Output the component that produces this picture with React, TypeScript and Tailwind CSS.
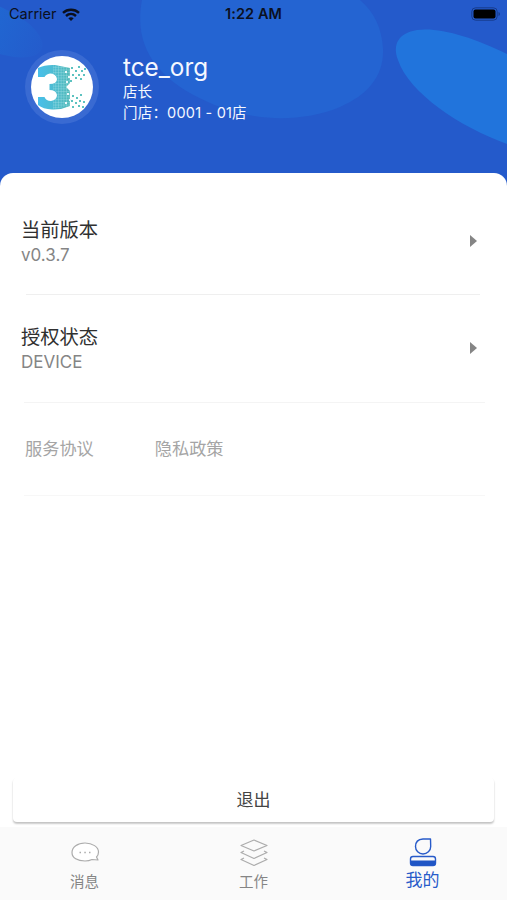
import type { ReactNode } from 'react';

const dots = [
  [41, 11], [48, 10], [51, 14], [45, 14], [54, 12], [42, 18], [48, 18], [53, 18],
  [45, 21], [50, 22], [40, 24], [42, 39], [46, 41], [50, 38], [41, 44], [45, 46],
  [49, 44], [53, 45], [48, 49], [52, 50], [42, 50],
];

const holes = [[34, 15], [37, 20], [35, 25], [36, 37], [34, 46], [38, 43]];

function Wifi() {
  return (
    <svg width="18" height="13" viewBox="0 0 18 13" fill="none" stroke="#0b0f1c" strokeWidth="2.4">
      <path d="M1 4.8C5.5.7 12.5.7 17 4.8M4 8C6.9 5.3 11.1 5.3 14 8" />
      <path d="M6.3 10.2C7.9 8.8 10.1 8.8 11.7 10.2L9 13Z" fill="#0b0f1c" stroke="none" />
    </svg>
  );
}

function Battery() {
  return (
    <svg width="30" height="14" viewBox="0 0 30 14">
      <rect x="0.8" y="0.8" width="25.4" height="12.4" rx="3.8" fill="none" stroke="#173b8c" />
      <rect x="2.5" y="2.5" width="22" height="9" rx="2" fill="#000" />
      <path d="M27.5 5v4q1.500-.5 1.500-2t-1.500-2" fill="#173b8c" />
    </svg>
  );
}

function Avatar() {
  return (
    <div className="flex size-[74px] items-center justify-center rounded-full bg-[#396ad2]">
      <svg width="62" height="62" viewBox="0 0 62 62">
        <defs>
          <linearGradient id="three" x1="0" x2="1">
            <stop stopColor="#48bfea" />
            <stop offset="1" stopColor="#52b9b7" />
          </linearGradient>
          <pattern id="mesh" width="2.7" height="2.7" patternUnits="userSpaceOnUse">
            <path d="M0 0H2.7M0 0V2.7" stroke="#a5dfe8" strokeWidth="0.7" />
          </pattern>
        </defs>
        <circle cx="31" cy="31" r="31" fill="#fff" />
        <path
          d="M7 12Q14 8.500 24 9L39 12V27L35 31L39 35V50Q30 54 21 53.500Q12 53 7 49V41H13.500Q15 45 20 45Q26 44 26 39Q25 34 18.500 34V28Q26 28 26 23Q25 17.500 19 17.500Q15 18 13.500 21H7Z"
          fill="url(#three)"
        />
        <path
          d="M22 9L39 12V27L35 31L39 35V50L22 53V45Q26 43 26 39Q26 35 22 34V28Q26 27 26 23Q26 18 22 18Z"
          fill="url(#mesh)"
        />
        {holes.map(([x, y]) => (
          <rect key={`${x}-${y}`} x={x} y={y} width="2" height="2" fill="#e8f8fa" />
        ))}
        {dots.map(([x, y]) => (
          <rect key={`${x}-${y}`} x={x - 1} y={y} width="2" height="2" fill="#5cc2c0" />
        ))}
      </svg>
    </div>
  );
}

function Row({ title, value }: { title: string; value: string }) {
  return (
    <div className="flex items-center justify-between pr-[30px] pl-[21px]">
      <div>
        <div className="text-[19.3px] leading-[26px] text-[#303030]">{title}</div>
        <div className="text-[17px] leading-6 text-[#858585]">{value}</div>
      </div>
      <svg className="mb-0.5" width="7" height="12" viewBox="0 0 7 12" fill="#858585">
        <path d="M0 0L7 6L0 12Z" />
      </svg>
    </div>
  );
}

function Tab({ label, active, children }: { label: string; active?: boolean; children: ReactNode }) {
  return (
    <div className="flex flex-1 flex-col items-center pt-2">
      <svg
        width="30"
        height="34"
        viewBox="0 0 30 34"
        fill="none"
        stroke={active ? '#285bc9' : '#acacac'}
        strokeWidth="1.2"
        strokeLinejoin="round"
      >
        {children}
      </svg>
      <div className={active ? 'mt-px text-[17px] leading-5 text-[#285bc9]' : 'mt-[3px] text-[14.5px] leading-5 text-[#858585]'}>
        {label}
      </div>
    </div>
  );
}

export default function App() {
  return (
    <div className="relative flex h-[900px] w-full flex-col overflow-hidden bg-[#245acb] font-[Inter,'Noto_Sans_CJK_SC',sans-serif]">
      <svg className="absolute top-0 left-0" width="507" height="190" viewBox="0 0 507 190">
        <defs>
          <linearGradient id="blob" x1="0.4" x2="1">
            <stop stopColor="#2067d2" />
            <stop offset="1" stopColor="#245ccc" />
          </linearGradient>
        </defs>
        <ellipse cx="-4" cy="29" rx="50" ry="22" transform="rotate(24 -4 29)" fill="url(#blob)" />
        <path d="M142 0C133 48 158 80 208 102C248 121 299 124 340 107C368 95 384 76 383 49C382 28 374 12 360 0Z" fill="#2464d2" />
        <path d="M507 54C473 37 439 27 417 30C399 33 392 44 398 60C409 93 460 127 507 144Z" fill="#2174dc" />
      </svg>

      <header className="relative flex h-[173px] shrink-0 flex-col">
        <div className="grid h-7 grid-cols-3 items-center pr-1.5 pl-[9px] text-[14.5px] text-[#0b1021]">
          <div className="flex items-center gap-[5px]">
            Carrier
            <Wifi />
          </div>
          <div className="-ml-[3px] text-center font-semibold tracking-[0.1px]">1:22 AM</div>
          <div className="flex justify-end">
            <Battery />
          </div>
        </div>
        <div className="flex pt-[22px] pl-[25px]">
          <Avatar />
          <div className="ml-6 pt-px text-[#f5f8ff]">
            <div className="text-[24.3px] leading-8">tce_org</div>
            <div className="-mt-[2px] text-[14.5px] leading-[21px]">店长</div>
            <div className="text-[14.5px] leading-[21px] tracking-[0.2px]">门店：0001 - 01店</div>
          </div>
        </div>
      </header>

      <main className="relative flex min-h-0 flex-1 flex-col rounded-t-[13px] bg-white">
        <div className="pt-[44px] pb-[27px]">
          <Row title="当前版本" value="v0.3.7" />
        </div>
        <div className="mr-[27px] ml-[26px] h-px bg-[#efefef]" />
        <div className="pt-[29px] pb-[28px]">
          <Row title="授权状态" value="DEVICE" />
        </div>
        <div className="mr-[22px] ml-[24px] h-px bg-[#f4f4f4]" />
        <div className="flex h-[92px] items-center gap-[61px] pl-[25px] text-[17.2px] text-[#a5a5a5]">
          <span>服务协议</span>
          <span>隐私政策</span>
        </div>
        <div className="mr-[22px] ml-[24px] h-px bg-[#f7f7f7]" />
        <button className="mx-[13px] mt-auto mb-[5px] h-11 rounded bg-white pt-0.5 text-[17px] text-[#444] shadow-[0_2px_2px_rgba(0,0,0,0.2),0_1px_2px_rgba(0,0,0,0.06)]">
          退出
        </button>
      </main>

      <nav className="relative flex h-[73px] shrink-0 bg-[#fafafa]">
        <Tab label="消息">
          <path
            d="M15 8C7.5 8 2 12 2 17.5S7.5 26 15 26Q19 26 22 24.5L28 25L26.500 22Q28.500 20 28.500 17C28.500 12 22.5 8 15 8Z"
            fill="#fff"
          />
          <path d="M9.5 17.5h1.5M14.3 17.5h1.5M19 17.5h1.5" strokeWidth="1.5" />
        </Tab>
        <Tab label="工作">
          <path d="M15 5L28 10.5L15 16L2 10.5ZM5 16L2 17.5L15 23.5L28 17.5L25 16M5 23L2 24.5L15 30.5L28 24.5L25 23" />
        </Tab>
        <Tab label="我的" active>
          <path d="M22.500 4H15Q7.500 4.500 7.500 11.5C7.500 15.800 10.800 19 15 19S22.700 15.800 22.700 11.500Z" strokeWidth="1.4" />
          <rect x="2.500" y="21.5" width="25" height="9" rx="2.5" strokeWidth="1.4" />
          <path d="M2.500 25.5H27.500V28Q27.500 30.500 25 30.500H5Q2.500 30.500 2.500 28Z" fill="#1f55c5" stroke="none" />
        </Tab>
      </nav>
    </div>
  );
}
